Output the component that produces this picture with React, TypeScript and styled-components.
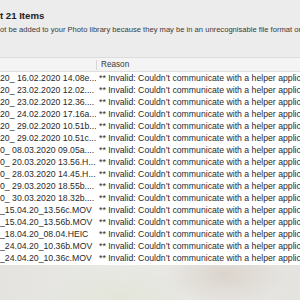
import styled, { createGlobalStyle } from "styled-components";

const files = [
  "20_ 16.02.2020 14.08e....",
  "20_ 23.02.2020 12.02....",
  "20_ 23.02.2020 12.36....",
  "20_ 24.02.2020 17.16a....",
  "20_ 29.02.2020 10.51b....",
  "20_ 29.02.2020 10.51c....",
  "0_ 08.03.2020 09.05a....",
  "0_ 20.03.2020 13.56.H....",
  "0_ 28.03.2020 14.45.H....",
  "0_ 29.03.2020 18.55b....",
  "0_ 30.03.2020 18.32b....",
  "_15.04.20_13.56c.MOV",
  "_15.04.20_13.56b.MOV",
  "_18.04.20_08.04.HEIC",
  "_24.04.20_10.36b.MOV",
  "_24.04.20_10.36c.MOV",
];

const reason = "** Invalid: Couldn’t communicate with a helper application";

const App = () => {
  return (
    <>
      <GlobalStyle />
      <Sheet>
        <Heading>
          <Title>t 21 Items</Title>
          <Subtitle>
            ot be added to your Photo library because they may be in an
            unrecognisable file format or
          </Subtitle>
        </Heading>
        <Table>
          <HeaderRow>
            <HeaderCell />
            <HeaderCell divider>Reason</HeaderCell>
          </HeaderRow>
          {files.map((name) => (
            <Row key={name}>
              <Cell>{name}</Cell>
              <Cell>{reason}</Cell>
            </Row>
          ))}
        </Table>
      </Sheet>
      <Desktop />
    </>
  );
};

const GlobalStyle = createGlobalStyle`
  html, body {
    margin: 0;
    padding: 0;
    width: 300px;
    height: 300px;
    overflow: hidden;
    background: #e9e8e5;
  }
  body {
    font-family: "Liberation Sans", Arial, sans-serif;
  }
`;

const Sheet = styled.div`
  width: 300px;
  height: 265px;
  background: #ececec;
  display: flex;
  flex-direction: column;
  overflow: hidden;
`;

const Heading = styled.div`
  height: 57px;
  padding: 10px 0 0 0;
  box-sizing: border-box;
  display: flex;
  flex-direction: column;
  gap: 2px;
`;

const Title = styled.div`
  font-size: 9.6px;
  font-weight: bold;
  color: #222222;
  line-height: 12px;
  white-space: nowrap;
`;

const Subtitle = styled.div`
  font-size: 7.6px;
  color: #3a3a3a;
  line-height: 11px;
  white-space: nowrap;
`;

const Table = styled.div`
  flex: 1;
  background: #ffffff;
  border-top: 1px solid #dcdcdc;
  display: flex;
  flex-direction: column;
`;

const HeaderRow = styled.div`
  display: grid;
  grid-template-columns: 96px 1fr;
  height: 13px;
  background: #f4f4f4;
  border-bottom: 1px solid #dedede;
  align-items: center;
`;

const HeaderCell = styled.div<{ divider?: boolean }>`
  height: 10px;
  font-size: 8.2px;
  line-height: 10px;
  color: #3a3a3a;
  padding-left: 4px;
  border-left: ${({ divider }) => (divider ? "1px solid #d6d6d6" : "none")};
  white-space: nowrap;
`;

const Row = styled.div`
  display: grid;
  grid-template-columns: 96px 1fr;
  height: 12px;
  align-items: center;
`;

const Cell = styled.div`
  font-size: 8.7px;
  line-height: 12px;
  color: #2a2a2a;
  white-space: nowrap;
  overflow: hidden;
  &:last-child {
    padding-left: 3px;
  }
`;

const Desktop = styled.div`
  height: 35px;
  background:
    radial-gradient(ellipse 60px 30px at 225px 10px, rgba(214, 205, 196, 0.7), transparent),
    radial-gradient(ellipse 70px 30px at 120px 30px, rgba(226, 228, 214, 0.8), transparent),
    linear-gradient(90deg, #e4e3df 0%, #e9e9e6 40%, #e7e6e2 70%, #e4e3e0 100%);
`;

export default App;
